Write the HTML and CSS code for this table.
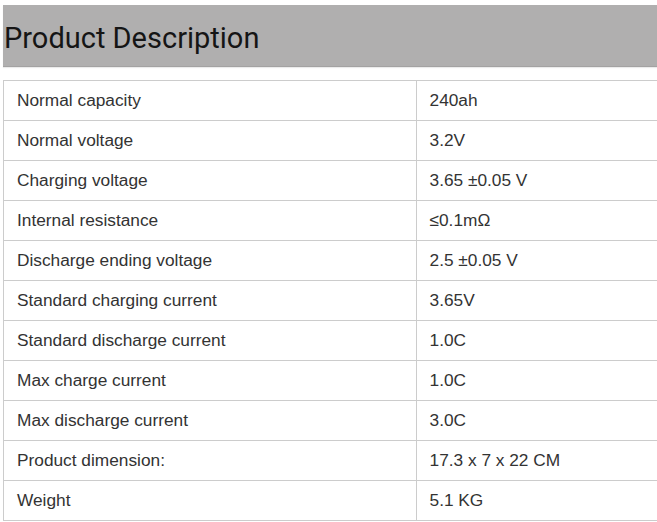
FILE: index.html
```html
<!DOCTYPE html>
<html>
<head>
<meta charset="utf-8">
<link rel="stylesheet" href="styles.css">
</head>
<body>
<div class="page">
  <div class="heading">Product Description</div>
  <table class="specs">
    <tr><td>Normal capacity</td><td>240ah</td></tr>
    <tr><td>Normal voltage</td><td>3.2V</td></tr>
    <tr><td>Charging voltage</td><td>3.65 ±0.05 V</td></tr>
    <tr><td>Internal resistance</td><td>≤0.1mΩ</td></tr>
    <tr><td>Discharge ending voltage</td><td>2.5 ±0.05 V</td></tr>
    <tr><td>Standard charging current</td><td>3.65V</td></tr>
    <tr><td>Standard discharge current</td><td>1.0C</td></tr>
    <tr><td>Max charge current</td><td>1.0C</td></tr>
    <tr><td>Max discharge current</td><td>3.0C</td></tr>
    <tr><td>Product dimension:</td><td>17.3 x 7 x 22 CM</td></tr>
    <tr><td>Weight</td><td>5.1 KG</td></tr>
  </table>
</div>
</body>
</html>
```
FILE: styles.css
```css
html, body {
  margin: 0;
  padding: 0;
  overflow: hidden;
  background: #fff;
}
.page {
  padding: 5px 0 0 3px;
  width: 654px;
  overflow: hidden;
}
.heading {
  height: 61px;
  background: #b0afaf;
  border-bottom: 1px solid #a3a2a2;
  box-shadow: 0 1px 1px rgba(0,0,0,0.08);
  font-family: Roboto, "Noto Sans", sans-serif;
  font-size: 29px;
  line-height: 66px;
  color: #151515;
  padding-left: 1px;
  width: 653px;
}
.specs {
  margin-top: 13px;
  border-collapse: collapse;
  width: 826px;
  font-family: "Liberation Sans", Arial, sans-serif;
  font-size: 17.3px;
  color: #333;
}
.specs td {
  border: 1px solid #cccccc;
  height: 40px;
  padding: 0 13px;
  box-sizing: border-box;
  width: 413px;
  vertical-align: middle;
}
```
